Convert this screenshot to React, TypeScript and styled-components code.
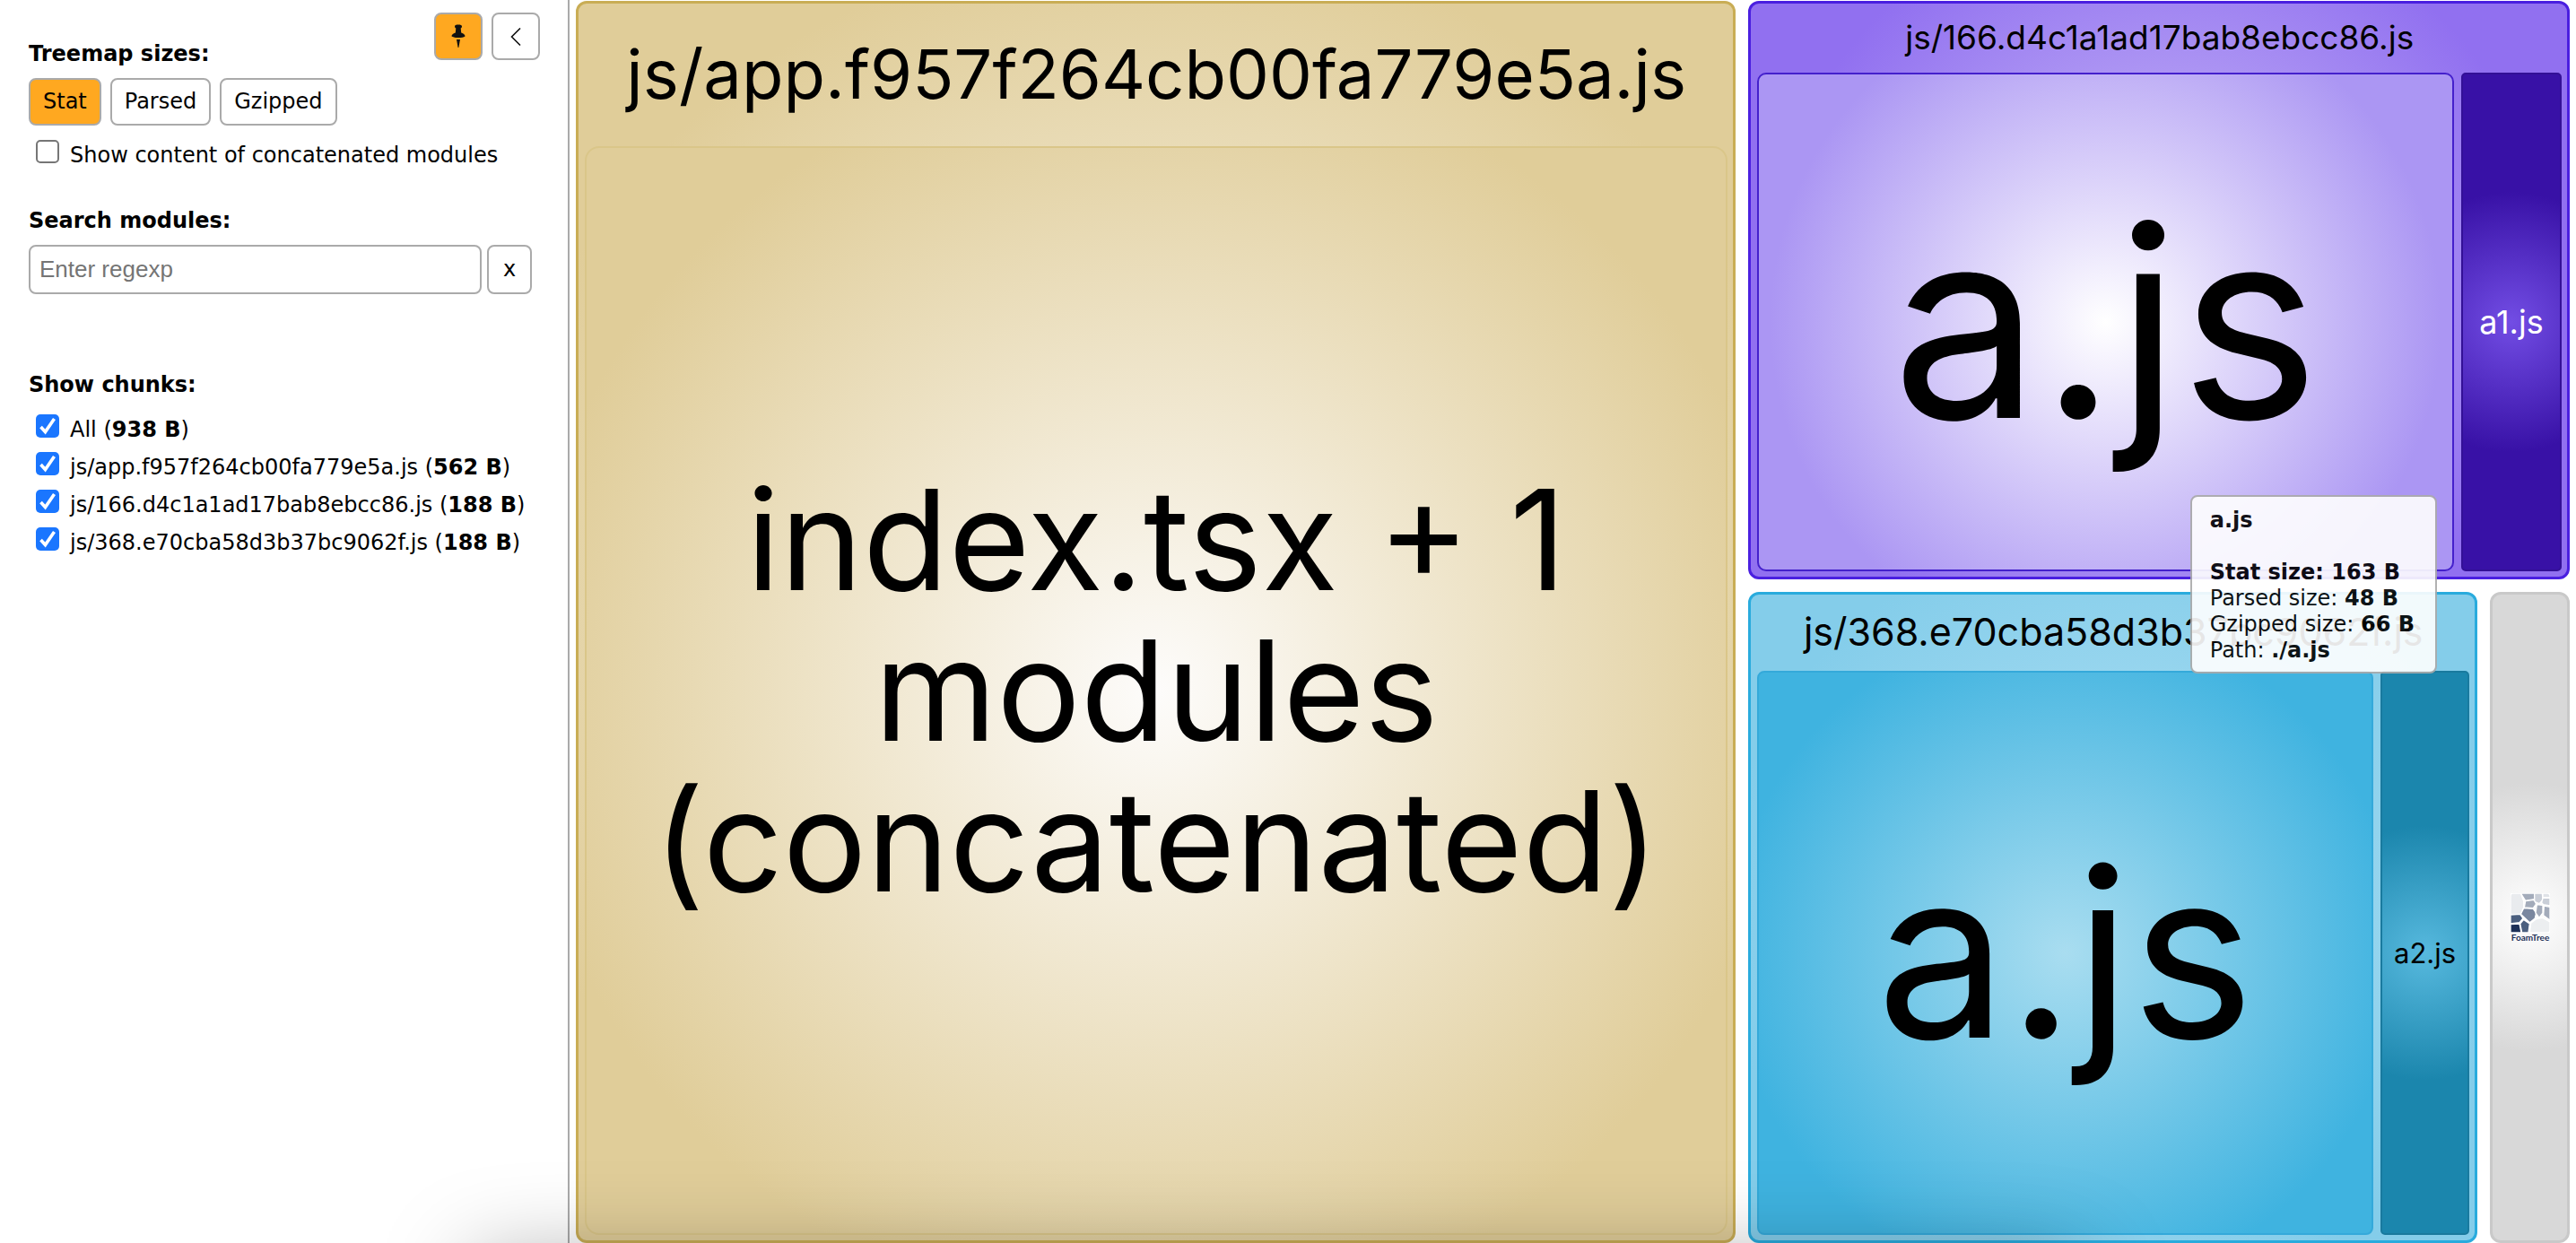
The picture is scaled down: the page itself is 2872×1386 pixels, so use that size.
import React, { useState } from 'react';
import styled, { createGlobalStyle, css } from 'styled-components';

const GlobalStyle = createGlobalStyle`
  *, *::before, *::after { box-sizing: border-box; }
  html, body, #root { height: 100%; }
  body {
    margin: 0;
    background: #fff;
    color: #000;
    font: 24px/29px Verdana, "DejaVu Sans", sans-serif;
  }
`;

const Page = styled.div`
  position: relative;
  display: flex;
  height: 100%;
  overflow: hidden;
`;

const Sidebar = styled.aside`
  flex: none;
  width: 635px;
  border-right: 2px solid #aaa;
  padding: 14px 31px 14px 32px;
  background: #fff;
`;

const TopBar = styled.div`
  display: flex;
  justify-content: space-between;
  align-items: flex-start;
  margin-bottom: 12px;
`;

const IconButtons = styled.div`
  display: flex;
  gap: 10px;
`;

const Button = styled.button<{ $active?: boolean }>`
  display: flex;
  align-items: center;
  justify-content: center;
  height: 53px;
  padding: 0 14px;
  border: 2px solid #aaa;
  border-radius: 8px;
  background: ${(p) => (p.$active ? '#ffa820' : '#fff')};
  color: #000;
  font: inherit;
`;

const IconButton = styled(Button)`
  width: 54px;
  padding: 0;
`;

const Heading = styled.h2`
  margin: 0;
  font-size: 24px;
  line-height: 29px;
  font-weight: bold;
`;

const TopHeading = styled(Heading)`
  padding-top: 32px;
`;

const SizeRow = styled.div`
  display: flex;
  gap: 10px;
  margin-bottom: 12px;
`;

const Section = styled.section<{ $gap: number }>`
  margin-top: ${(p) => p.$gap}px;
`;

const CheckRow = styled.label`
  display: flex;
  align-items: flex-start;
  gap: 12px;
  height: 42px;
  padding: 4px 0 0 8px;
  white-space: nowrap;
`;

const Check = styled.input`
  appearance: none;
  flex: none;
  width: 26px;
  height: 26px;
  margin: 0;
  border: 2px solid #767676;
  border-radius: 5px;
  background: #fff;
  &:checked {
    border: 0;
    background: #1a76ff url("data:image/svg+xml,%3Csvg xmlns='http://www.w3.org/2000/svg' viewBox='0 0 26 26'%3E%3Cpath d='M5.500 14L10.500 19.500 20.500 5' fill='none' stroke='white' stroke-width='3.600'/%3E%3C/svg%3E") center / 26px 26px;
  }
`;

const CheckText = styled.span`
  padding-top: 3px;
`;

const ChunkList = styled.div`
  margin-top: 14px;
`;

const SearchRow = styled.div`
  display: flex;
  gap: 6px;
  margin: 12px 9px 0 0;
`;

const SearchInput = styled.input`
  flex: 1;
  min-width: 0;
  height: 55px;
  padding: 0 10px;
  border: 2px solid #aaa;
  border-radius: 8px;
  font: 26px "Liberation Sans", Arial, sans-serif;
  &::placeholder { color: #757575; }
`;

const ClearButton = styled(Button)`
  width: 50px;
  height: 55px;
  padding: 0;
`;

const grid = css<{ $columns?: string; $rows?: string }>`
  display: grid;
  grid-template-columns: ${(p) => p.$columns ?? 'minmax(0, 1fr)'};
  grid-template-rows: ${(p) => p.$rows ?? 'minmax(0, 1fr)'};
`;

const Treemap = styled.main`
  ${grid}
  flex: 1;
  min-width: 0;
  gap: 14px;
  padding: 1px 7px 0;
  color: #000;
  font-family: Inter, "Liberation Sans", sans-serif;
`;

const Split = styled.div`
  ${grid}
  gap: 14px;
`;

type Tone = { edge: string; core: string; line: string; r: number };

const tone = css<{ $tone: Tone }>`
  border-style: solid;
  border-color: ${(p) => p.$tone.line};
  background: radial-gradient(circle ${(p) => p.$tone.r}px at center, ${(p) => p.$tone.core}, ${(p) => p.$tone.edge}) border-box;
`;

const Group = styled.section<{ $tone: Tone }>`
  ${tone}
  min-width: 0;
  display: flex;
  flex-direction: column;
  border-width: 3px;
  border-radius: 12px;
  padding: 0 6px 6px 7px;
`;

const GroupTitle = styled.h3<{ $size: number; $height: number }>`
  margin: 0;
  padding-bottom: 2px;
  font-size: ${(p) => p.$size}px;
  line-height: ${(p) => p.$height}px;
  font-weight: normal;
  text-align: center;
  white-space: nowrap;
`;

const Leaves = styled.div`
  ${grid}
  flex: 1;
  min-height: 0;
  gap: 8px;
`;

const Leaf = styled.div<{ $tone: Tone; $radius: number; $size: number; $light?: boolean }>`
  ${tone}
  min-width: 0;
  display: flex;
  align-items: center;
  justify-content: center;
  border-width: 2px;
  border-radius: ${(p) => p.$radius}px;
  color: ${(p) => (p.$light ? '#fff' : '#000')};
  font-size: ${(p) => p.$size}px;
  line-height: 168px;
  text-align: center;
`;

const Credit = styled.a`
  margin: auto;
  padding-top: 6px;
  display: flex;
  flex-direction: column;
  align-items: center;
  color: #1d3057;
  font: bold 10px/10px Lato, sans-serif;
  text-decoration: none;
`;

const Tooltip = styled.div`
  position: absolute;
  right: 155px;
  top: 552px;
  padding: 12px 23px 9px 20px;
  border: 2px solid #aaa;
  border-radius: 8px;
  background: #fff;
  opacity: 0.9;
  white-space: nowrap;
`;

const TooltipName = styled.div`
  margin-bottom: 29px;
  font-weight: bold;
`;

const BottomShade = styled.div`
  position: absolute;
  left: 528px;
  right: 555px;
  bottom: -320px;
  height: 300px;
  box-shadow: 0 0 100px rgba(0, 0, 0, 0.34);
  pointer-events: none;
`;

const tones = {
  gold: { edge: '#e0cd99', core: '#fdfcf9', line: '#c9ad55', r: 763 },
  goldLeaf: { edge: '#e0cd99', core: '#fdfcfb', line: '#dac689', r: 710 },
  violet: { edge: '#9170f0', core: '#cec2f7', line: '#4a1fe0', r: 438 },
  violetLeaf: { edge: '#ab96f3', core: '#ffffff', line: '#4420cc', r: 374 },
  violetDark: { edge: '#3811a6', core: '#724de4', line: '#331096', r: 145 },
  sky: { edge: '#84cdea', core: '#b4e2f5', line: '#29abdd', r: 437 },
  skyLeaf: { edge: '#3fb3e0', core: '#a9ddf0', line: '#34a9da', r: 374 },
  skyDark: { edge: '#1b86ad', core: '#57b9de', line: '#197a9e', r: 142 },
  grey: { edge: '#d8d8d8', core: '#ffffff', line: '#c9c9c9', r: 150 },
};

const chunks = [
  { name: 'All', size: '938 B' },
  { name: 'js/app.f957f264cb00fa779e5a.js', size: '562 B' },
  { name: 'js/166.d4c1a1ad17bab8ebcc86.js', size: '188 B' },
  { name: 'js/368.e70cba58d3b37bc9062f.js', size: '188 B' },
];

const PinIcon = () => (
  <svg width="16" height="28" viewBox="0 0 16 28" aria-hidden="true">
    <path
      d="M4 2.500C4 1 5.500 0.500 8 0.500s4 .5 4 2c0 1-.6 1.600-1.300 2L11.200 9.500C14 10.200 15.500 12 15.500 13.500c-1.500 1-4 1.600-7.500 1.600s-6-.6-7.500-1.600C.5 12 2 10.200 4.800 9.500L5.300 4.500C4.600 4.100 4 3.500 4 2.500zM6 17h4L8.400 26h-.8z"
      fill="#111"
    />
  </svg>
);

const ChevronIcon = () => (
  <svg width="12" height="20" viewBox="0 0 12 20" aria-hidden="true">
    <path d="M11 0.500L1.500 10 11 19.500" fill="none" stroke="#111" strokeWidth="1.600" />
  </svg>
);

const FoamLogo = () => (
  <svg width="44" height="44" viewBox="0 0 132 132" aria-hidden="true">
    <g stroke="#fff" strokeWidth="4" strokeLinejoin="round">
      <path d="M8 0H34L44 26 44 48 34 70 0 72V8Q0 0 8 0z" fill="#e9ebee" />
      <path d="M34 0H80L80 20 50 25z" fill="#a3abba" />
      <path d="M80 0H106L108 22 96 35 80 28z" fill="#c9ced7" />
      <path d="M108 0H124Q132 0 132 10V14H108z" fill="#dfe2e7" />
      <path d="M108 16H132V42L110 38 104 32z" fill="#c9ced7" />
      <path d="M50 26L78 22 86 36 76 50 46 48z" fill="#a3abba" />
      <path d="M44 50L76 52 86 66 82 84 64 98 34 70z" fill="#7a879f" />
      <path d="M88 38L108 40 108 66 96 82 84 66z" fill="#a3abba" />
      <path d="M112 42L132 46V90L110 74z" fill="#a3abba" />
      <path d="M0 72L32 70 42 84 30 98 0 102z" fill="#4b5f7f" />
      <path d="M0 104L30 102 36 132H0z" fill="#1d3057" />
      <path d="M44 88L64 102 60 132H38L32 102z" fill="#4b5f7f" />
      <path d="M68 100L86 86 108 82 132 96V124Q132 132 124 132H64z" fill="#eceef0" />
    </g>
  </svg>
);

export default function App() {
  const [size, setSize] = useState('Stat');
  return (
    <Page>
      <GlobalStyle />
      <Sidebar>
        <TopBar>
          <TopHeading>Treemap sizes:</TopHeading>
          <IconButtons>
            <IconButton $active aria-label="Pin"><PinIcon /></IconButton>
            <IconButton aria-label="Hide sidebar"><ChevronIcon /></IconButton>
          </IconButtons>
        </TopBar>
        <SizeRow>
          {['Stat', 'Parsed', 'Gzipped'].map((s) => (
            <Button key={s} $active={s === size} onClick={() => setSize(s)}>{s}</Button>
          ))}
        </SizeRow>
        <CheckRow>
          <Check type="checkbox" />
          <CheckText>Show content of concatenated modules</CheckText>
        </CheckRow>
        <Section $gap={38}>
          <Heading>Search modules:</Heading>
          <SearchRow>
            <SearchInput type="text" placeholder="Enter regexp" aria-label="Search modules" />
            <ClearButton>x</ClearButton>
          </SearchRow>
        </Section>
        <Section $gap={87}>
          <Heading>Show chunks:</Heading>
          <ChunkList>
            {chunks.map((c) => (
              <CheckRow key={c.name}>
                <Check type="checkbox" defaultChecked />
                <CheckText>{c.name} (<b>{c.size}</b>)</CheckText>
              </CheckRow>
            ))}
          </ChunkList>
        </Section>
      </Sidebar>
      <Treemap $columns="minmax(0, 1294fr) minmax(0, 916fr)">
        <Group $tone={tones.gold}>
          <GroupTitle $size={76} $height={157}>js/app.f957f264cb00fa779e5a.js</GroupTitle>
          <Leaves>
            <Leaf $tone={tones.goldLeaf} $radius={16} $size={156}>
              index.tsx + 1<br />modules<br />(concatenated)
            </Leaf>
          </Leaves>
        </Group>
        <Split $rows="minmax(0, 645fr) minmax(0, 725fr)">
          <Group $tone={tones.violet}>
            <GroupTitle $size={37} $height={75}>js/166.d4c1a1ad17bab8ebcc86.js</GroupTitle>
            <Leaves $columns="minmax(0, 776fr) minmax(0, 112fr)">
              <Leaf $tone={tones.violetLeaf} $radius={10} $size={294}>a.js</Leaf>
              <Leaf $tone={tones.violetDark} $radius={5} $size={36} $light>a1.js</Leaf>
            </Leaves>
          </Group>
          <Split $columns="minmax(0, 813fr) minmax(0, 89fr)">
            <Group $tone={tones.sky}>
              <GroupTitle $size={43} $height={83}>js/368.e70cba58d3b37bc9062f.js</GroupTitle>
              <Leaves $columns="minmax(0, 687fr) minmax(0, 99fr)">
                <Leaf $tone={tones.skyLeaf} $radius={8} $size={260}>a.js</Leaf>
                <Leaf $tone={tones.skyDark} $radius={5} $size={31}>a2.js</Leaf>
              </Leaves>
            </Group>
            <Group $tone={tones.grey}>
              <Credit href="#foamtree"><FoamLogo />FoamTree</Credit>
            </Group>
          </Split>
        </Split>
      </Treemap>
      <Tooltip role="tooltip">
        <TooltipName>a.js</TooltipName>
        <div><b>Stat size: 163 B</b></div>
        <div>Parsed size: <b>48 B</b></div>
        <div>Gzipped size: <b>66 B</b></div>
        <div>Path: <b>./a.js</b></div>
      </Tooltip>
      <BottomShade />
    </Page>
  );
}
